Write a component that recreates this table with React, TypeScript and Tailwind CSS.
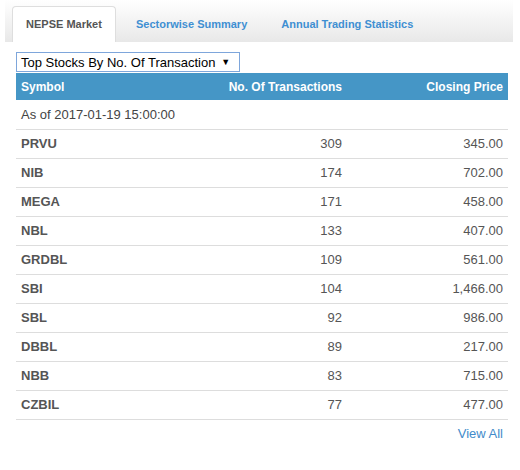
import React from 'react';

const rows = [
  { symbol: 'PRVU', tx: 309, price: '345.00' },
  { symbol: 'NIB', tx: 174, price: '702.00' },
  { symbol: 'MEGA', tx: 171, price: '458.00' },
  { symbol: 'NBL', tx: 133, price: '407.00' },
  { symbol: 'GRDBL', tx: 109, price: '561.00' },
  { symbol: 'SBI', tx: 104, price: '1,466.00' },
  { symbol: 'SBL', tx: 92, price: '986.00' },
  { symbol: 'DBBL', tx: 89, price: '217.00' },
  { symbol: 'NBB', tx: 83, price: '715.00' },
  { symbol: 'CZBIL', tx: 77, price: '477.00' },
];

export default function App() {
  return (
    <div className="w-[520px] h-[470px] bg-white text-[13px] text-[#333] font-['Liberation_Sans',Arial,sans-serif]">
      {/* Tabs */}
      <div className="ml-[5px] mr-[7px] h-[42px] pl-[7px] flex items-end bg-gradient-to-b from-white to-[#e8e8e8]">
        <div className="h-[36px] w-[104px] bg-white border border-b-0 border-[#dedede] rounded-t-[4px] flex items-center justify-center text-[11px] font-bold text-[#555]">
          NEPSE Market
        </div>
        <div className="h-[36px] flex items-center pl-[20px] pr-[17px] text-[11px] font-bold text-[#3f8fd2]">
          Sectorwise Summary
        </div>
        <div className="h-[36px] flex items-center pl-[17px] text-[11px] font-bold text-[#3f8fd2]">
          Annual Trading Statistics
        </div>
      </div>

      <div className="px-[16px] pt-[10px] w-[508px] box-content">
        <div className="w-[224px] h-[20px] border border-[#7ea6db] flex items-center pl-[4px] text-[13px] text-black leading-none">
          <span>Top Stocks By No. Of Transaction</span>
          <span className="ml-[6px] text-[9px]">▼</span>
        </div>

        <div className="w-[492px] mt-[1px]">
          <div className="h-[27px] bg-[#4596c6] text-white font-bold text-[12px] flex items-center">
            <div className="flex-1 pl-[5px]">Symbol</div>
            <div className="w-[152px] text-right pr-[5px]">No. Of Transactions</div>
            <div className="w-[161px] text-right pr-[5px]">Closing Price</div>
          </div>
          <div className="h-[29px] flex items-center pl-[5px] text-[#444]">As of 2017-01-19 15:00:00</div>
          {rows.map((r) => (
            <div key={r.symbol} className="h-[29px] border-t border-[#dddddd] flex items-center">
              <div className="flex-1 pl-[5px] font-bold text-[#555]">{r.symbol}</div>
              <div className="w-[152px] text-right pr-[5px] text-[#555]">{r.tx}</div>
              <div className="w-[161px] text-right pr-[5px] text-[#555]">{r.price}</div>
            </div>
          ))}
          <div className="border-t border-[#dddddd] pt-[4px] text-right pr-[5px]">
            <span className="text-[#428bca]">View All</span>
          </div>
        </div>
      </div>
    </div>
  );
}
